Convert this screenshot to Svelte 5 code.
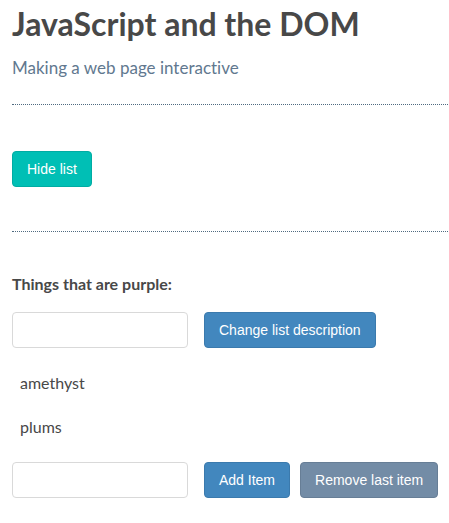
<main>
  <header>
    <h1>JavaScript and the DOM</h1>
    <p class="subtitle">Making a web page interactive</p>
  </header>
  <section class="toggle">
    <button class="teal" type="button" onclick={() => (visible = !visible)}>{visible ? 'Hide list' : 'Show list'}</button>
  </section>
  {#if visible}
    <section class="list">
      <p class="description">{description}:</p>
      <div class="row">
        <input type="text" aria-label="List description" bind:value={descriptionInput} />
        <button type="button" onclick={changeDescription}>Change list description</button>
      </div>
      <ul>
        {#each items as item}
          <li>{item}</li>
        {/each}
      </ul>
      <div class="row">
        <input type="text" aria-label="New item" bind:value={itemInput} />
        <button type="button" onclick={addItem}>Add Item</button>
        <button class="slate" type="button" onclick={() => items.pop()}>Remove last item</button>
      </div>
    </section>
  {/if}
</main>

<script>
  let visible = $state(true);
  let description = $state('Things that are purple');
  let descriptionInput = $state('');
  let itemInput = $state('');
  let items = $state(['amethyst', 'plums']);

  function changeDescription() {
    description = descriptionInput;
    descriptionInput = '';
  }

  function addItem() {
    items.push(itemInput);
    itemInput = '';
  }
</script>

<style>
  :global(body) {
    background: #fff;
  }
  main {
    padding: 4px 1px 24px 12px;
    font-family: Lato, sans-serif;
    font-size: 16px;
    line-height: 24px;
    font-variant-ligatures: none;
    color: #484848;
  }
  header {
    border-bottom: 1px dotted #4f6a80;
    padding-bottom: 24px;
  }
  h1 {
    margin: 0;
    font-size: 32px;
    line-height: 40px;
    font-weight: 700;
  }
  .subtitle {
    margin: 12px 0 0;
    font-size: 17px;
    line-height: 24px;
    color: #61788f;
  }
  .toggle {
    padding: 46px 0 44px;
    border-bottom: 1px dotted #4f6a80;
    display: flex;
  }
  .description {
    margin: 40px 0 16px;
    font-weight: 700;
  }
  .row {
    display: flex;
    gap: 10px;
  }
  input {
    box-sizing: border-box;
    width: 176px;
    height: 36px;
    margin: 0 6px 0 0;
    padding: 0 8px;
    border: 1px solid #d9d9d9;
    border-radius: 4px;
    font: inherit;
    color: inherit;
  }
  button {
    box-sizing: border-box;
    height: 36px;
    padding: 0 14px;
    border: 1px solid #3b7aad;
    border-radius: 4px;
    background: #4287be;
    color: #fff;
    font: 14px "Liberation Sans", Arial, sans-serif;
    white-space: nowrap;
  }
  .teal {
    background: #00bfb5;
    border-color: #00aca3;
  }
  .slate {
    background: #738ca6;
    border-color: #677e96;
  }
  ul {
    list-style: none;
    margin: 13px 0;
    padding: 0;
  }
  li {
    padding: 10px 8px;
  }
</style>
